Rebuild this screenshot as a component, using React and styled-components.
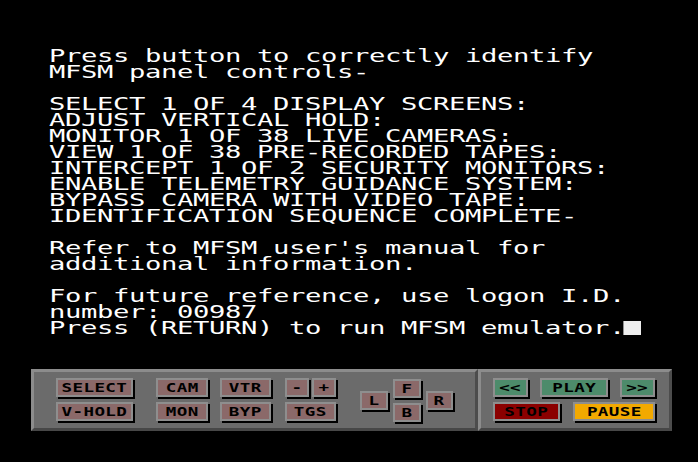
import React from 'react'
import styled, { createGlobalStyle } from 'styled-components'

const GlobalStyle = createGlobalStyle`
  html, body {
    margin: 0;
    padding: 0;
    background: #000;
  }
`

const Screen = styled.div`
  width: 698px;
  height: 462px;
  background: #000;
  overflow: hidden;
  display: flex;
  flex-direction: column;
`

const Terminal = styled.div`
  padding: 48px 0 0 49px;
  height: 288px;
`

const TextBlock = styled.div`
  font-family: "DejaVu Sans Mono", "Liberation Mono", monospace;
  font-size: 17px;
  line-height: 16px;
  letter-spacing: -0.235px;
  color: #fff;
  white-space: pre;
  transform: scaleX(1.6);
  transform-origin: 0 0;
`

const Line = styled.div`
  min-height: 16px;
`

const Cursor = styled.span`
  display: inline-block;
  width: 10.6px;
  height: 14px;
  margin-left: -1px;
  background: #eee;
  vertical-align: -1px;
`

const ControlBar = styled.div`
  display: flex;
  margin: 33px 0 0 31px;
`

const Panel = styled.div`
  box-sizing: border-box;
  width: ${p => p.$width}px;
  height: 62px;
  background: #6b6b6b;
  border-style: solid;
  border-width: 3px;
  border-color: #8c8c8c #4c4c4c #474747 #8c8c8c;
  padding: 6px 0 0 ${p => p.$pad}px;
  display: flex;
  align-items: center;
`

const Group = styled.div`
  display: flex;
  flex-direction: column;
  gap: 5px;
  margin-left: ${p => p.$ml || 0}px;
  align-self: flex-start;
`

const Pair = styled.div`
  display: flex;
  gap: 3px;
`

const DPad = styled.div`
  display: flex;
  align-items: center;
  gap: 5px;
  margin-left: ${p => p.$ml}px;
  margin-bottom: 6px;
`

const Row = styled.div`
  display: flex;
  justify-content: space-between;
  width: 162px;
`

const tones = {
  pink: '#8b6969',
  green: '#4d8b6b',
  red: '#8b0000',
  yellow: '#f2a900',
}

const Button = styled.div`
  box-sizing: border-box;
  width: ${p => p.$w}px;
  height: 19px;
  border: 2px solid #8e8e8e;
  background: ${p => tones[p.$tone || 'pink']};
  box-shadow: 2px 2px 0 #000;
  display: flex;
  align-items: center;
  justify-content: center;
`

const Label = styled.span`
  display: inline-block;
  font-family: "DejaVu Sans Mono", "Liberation Mono", monospace;
  font-weight: bold;
  font-size: 13px;
  line-height: 13px;
  letter-spacing: 0.3px;
  color: #000;
  white-space: pre;
  transform: scaleX(1.35);
`

const Btn = ({ w, tone, children }) => (
  <Button $w={w} $tone={tone}>
    <Label>{children}</Label>
  </Button>
)

const lines = [
  'Press button to correctly identify',
  'MFSM panel controls-',
  '',
  'SELECT 1 OF 4 DISPLAY SCREENS:',
  'ADJUST VERTICAL HOLD:',
  'MONITOR 1 OF 38 LIVE CAMERAS:',
  'VIEW 1 OF 38 PRE-RECORDED TAPES:',
  'INTERCEPT 1 OF 2 SECURITY MONITORS:',
  'ENABLE TELEMETRY GUIDANCE SYSTEM:',
  'BYPASS CAMERA WITH VIDEO TAPE:',
  'IDENTIFICATION SEQUENCE COMPLETE-',
  '',
  "Refer to MFSM user's manual for",
  'additional information.',
  '',
  'For future reference, use logon I.D.',
  'number: 00987',
]

export default function App() {
  return (
    <Screen>
      <GlobalStyle />
      <Terminal>
        <TextBlock>
          {lines.map((l, i) => <Line key={i}>{l}</Line>)}
          <Line>Press (RETURN) to run MFSM emulator.<Cursor /></Line>
        </TextBlock>
      </Terminal>
      <ControlBar>
        <Panel $width={447} $pad={22}>
          <Group>
            <Btn w={77}>SELECT</Btn>
            <Btn w={77}>V-HOLD</Btn>
          </Group>
          <Group $ml={23}>
            <Btn w={52}>CAM</Btn>
            <Btn w={52}>MON</Btn>
          </Group>
          <Group $ml={12}>
            <Btn w={51}>VTR</Btn>
            <Btn w={51}>BYP</Btn>
          </Group>
          <Group $ml={14}>
            <Pair>
              <Btn w={24}>-</Btn>
              <Btn w={24}>+</Btn>
            </Pair>
            <Btn w={51}>TGS</Btn>
          </Group>
          <DPad $ml={24}>
            <Btn w={28}>L</Btn>
            <Group>
              <Btn w={28}>F</Btn>
              <Btn w={28}>B</Btn>
            </Group>
            <Btn w={27}>R</Btn>
          </DPad>
        </Panel>
        <Panel $width={194} $pad={12}>
          <Group>
            <Row>
              <Btn w={35} tone="green">{'<<'}</Btn>
              <Btn w={68} tone="green">PLAY</Btn>
              <Btn w={35} tone="green">{'>>'}</Btn>
            </Row>
            <Row>
              <Btn w={67} tone="red">STOP</Btn>
              <Btn w={82} tone="yellow">PAUSE</Btn>
            </Row>
          </Group>
        </Panel>
      </ControlBar>
    </Screen>
  )
}
